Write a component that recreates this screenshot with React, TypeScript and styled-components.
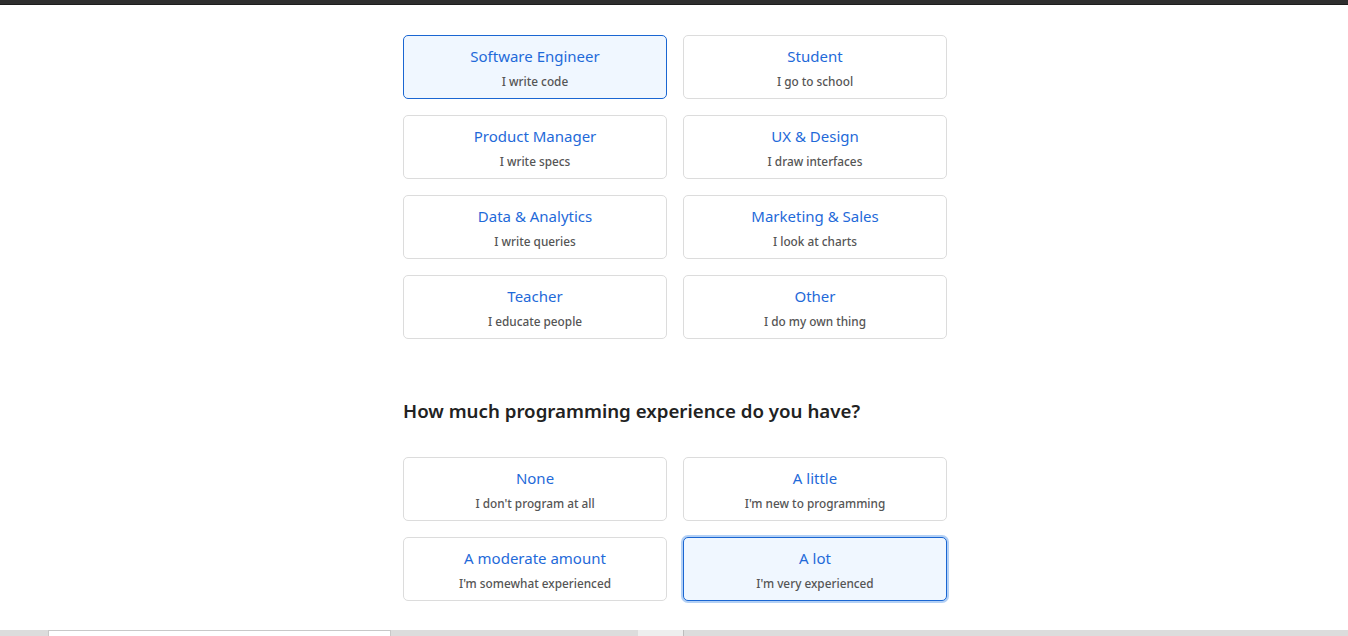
import { useState } from "react";
import styled, { createGlobalStyle, css } from "styled-components";

const GlobalStyle = createGlobalStyle`
  *, *::before, *::after {
    box-sizing: border-box;
  }
  html, body {
    margin: 0;
    padding: 0;
    background: #fff;
    font-family: "Noto Sans", "Open Sans", sans-serif;
  }
`;

const Screen = styled.div`
  height: 636px;
  display: flex;
  flex-direction: column;
  overflow: hidden;
`;

const TopBar = styled.div`
  height: 5px;
  background: #2e2e2e;
  border-bottom: 1px solid #1c1c1c;
  flex: none;
`;

const Page = styled.main`
  flex: 1;
  width: 546px;
  margin: 0 auto;
  padding: 30px 0 0 2px;
`;

const Grid = styled.div`
  display: grid;
  grid-template-columns: 1fr 1fr;
  gap: 16px;
`;

const Heading = styled.h2`
  margin: 60px 0 34px;
  font-size: 18.7px;
  line-height: 24px;
  font-weight: 600;
  color: #222;
`;

const Card = styled.button<{ $selected?: boolean; $focused?: boolean }>`
  height: 64px;
  display: flex;
  flex-direction: column;
  align-items: center;
  justify-content: flex-start;
  gap: 7px;
  border: 1px solid #dcdcdc;
  border-radius: 5px;
  background: #fff;
  font-family: inherit;
  cursor: pointer;
  padding: 10px 16px 0;

  ${(p) =>
    p.$selected &&
    css`
      background: #f0f7ff;
      border-color: #1a66d2;
    `}

  ${(p) =>
    p.$focused &&
    css`
      border-width: 1.5px;
      padding-top: 9.5px;
      box-shadow: 0 0 0 2px #b3d0f5;
    `}
`;

const Title = styled.span`
  font-size: 15px;
  line-height: 20px;
  color: #1f6ad9;
`;

const Sub = styled.span`
  font-size: 11.8px;
  line-height: 16px;
  font-weight: 500;
  color: #555;
`;

const BottomStrip = styled.div`
  height: 6px;
  flex: none;
  display: flex;
  background: #dcdcdc;
`;

const StripPart = styled.div<{ $w: number; $tone: "plain" | "white" | "light" }>`
  width: ${(p) => p.$w}px;
  flex: none;
  ${(p) =>
    p.$tone === "white" &&
    css`
      background: #fff;
      border-top: 1px solid #c8c8c8;
      border-left: 1px solid #c8c8c8;
      border-right: 1px solid #c8c8c8;
    `}
  ${(p) =>
    p.$tone === "light" &&
    css`
      background: #eeeeee;
      border-right: 1px solid #bdbdbd;
    `}
`;

const roles = [
  ["Software Engineer", "I write code"],
  ["Student", "I go to school"],
  ["Product Manager", "I write specs"],
  ["UX & Design", "I draw interfaces"],
  ["Data & Analytics", "I write queries"],
  ["Marketing & Sales", "I look at charts"],
  ["Teacher", "I educate people"],
  ["Other", "I do my own thing"],
];

const levels = [
  ["None", "I don't program at all"],
  ["A little", "I'm new to programming"],
  ["A moderate amount", "I'm somewhat experienced"],
  ["A lot", "I'm very experienced"],
];

export default function App() {
  const [role, setRole] = useState("Software Engineer");
  const [level, setLevel] = useState("A lot");

  return (
    <Screen>
      <GlobalStyle />
      <TopBar />
      <Page>
        <Grid>
          {roles.map(([t, s]) => (
            <Card key={t} $selected={role === t} onClick={() => setRole(t)}>
              <Title>{t}</Title>
              <Sub>{s}</Sub>
            </Card>
          ))}
        </Grid>
        <Heading>How much programming experience do you have?</Heading>
        <Grid>
          {levels.map(([t, s]) => (
            <Card
              key={t}
              $selected={level === t}
              $focused={level === t}
              onClick={() => setLevel(t)}
            >
              <Title>{t}</Title>
              <Sub>{s}</Sub>
            </Card>
          ))}
        </Grid>
      </Page>
      <BottomStrip>
        <StripPart $w={48} $tone="plain" />
        <StripPart $w={343} $tone="white" />
        <StripPart $w={247} $tone="plain" />
        <StripPart $w={46} $tone="light" />
      </BottomStrip>
    </Screen>
  );
}
